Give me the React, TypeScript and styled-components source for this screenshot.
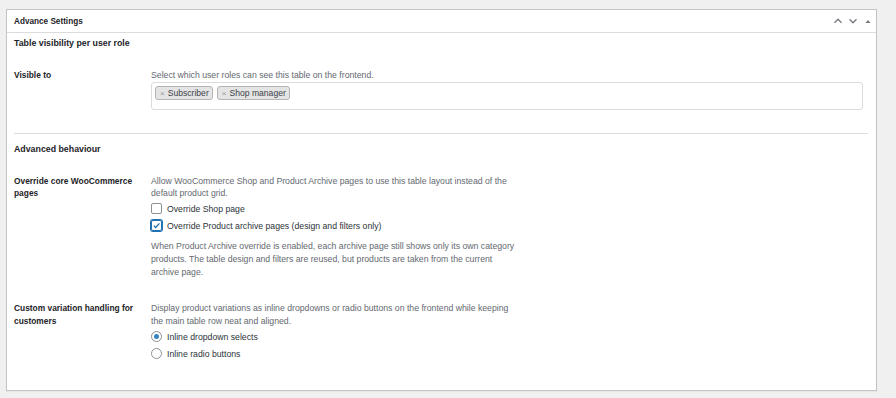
import React, { useState } from "react";
import styled, { createGlobalStyle } from "styled-components";

const GlobalStyle = createGlobalStyle`
  body {
    margin: 0;
    background: #f0f0f1;
    font-family: "Liberation Sans", Arial, sans-serif;
    color: #3c434a;
  }
`;

const Page = styled.div`
  padding: 9px 19px 9px 6px;
`;

const Panel = styled.div`
  background: #fff;
  border: 1px solid #c3c4c7;
  box-shadow: 0 1px 1px rgba(0, 0, 0, 0.04);
`;

const PanelHeader = styled.div`
  height: 22px;
  display: flex;
  align-items: center;
  justify-content: space-between;
  padding: 0 3px 0 7px;
  border-bottom: 1px solid #dcdcde;
`;

const PanelTitle = styled.h2`
  margin: 0;
  font-size: 8.2px;
  font-weight: 700;
  color: #1d2327;
`;

const HeaderActions = styled.div`
  display: flex;
  align-items: center;
  gap: 5px;
  color: #787c82;
`;

const IconButton = styled.span`
  display: flex;
  align-items: center;
  justify-content: center;
  width: 10px;
  height: 10px;
`;

const PanelBody = styled.div`
  padding: 3px 8px 28px 7px;
`;

const SectionTitle = styled.h3<{ $top?: number }>`
  margin: ${(p) => p.$top ?? 0}px 0 0;
  font-size: 8.8px;
  line-height: 14px;
  font-weight: 700;
  color: #1d2327;
`;

const Row = styled.div<{ $top: number }>`
  display: grid;
  grid-template-columns: 137px 1fr;
  margin-top: ${(p) => p.$top}px;
`;

const Label = styled.div<{ $lh?: number }>`
  font-size: 8.4px;
  line-height: ${(p) => p.$lh ?? 12}px;
  font-weight: 700;
  color: #1d2327;
  padding-right: 8px;
`;

const Field = styled.div`
  display: flex;
  flex-direction: column;
`;

const Description = styled.p<{ $lh?: number; $top?: number }>`
  margin: ${(p) => p.$top ?? 0}px 0 0;
  font-size: 8.7px;
  line-height: ${(p) => p.$lh ?? 12}px;
  color: #646970;
  max-width: 367px;
`;

const TagBox = styled.div`
  margin-top: 1px;
  height: 28px;
  width: 712px;
  box-sizing: border-box;
  border: 1px solid #dcdcde;
  border-radius: 3px;
  padding: 3px 3px;
  display: flex;
  align-items: flex-start;
  gap: 4px;
`;

const Tag = styled.span`
  display: inline-flex;
  align-items: center;
  gap: 3px;
  height: 14px;
  box-sizing: border-box;
  padding: 0 3px 0 4px;
  background: #e4e4e4;
  border: 1px solid #b4b4b4;
  border-radius: 3px;
  font-size: 8.6px;
  color: #3c434a;
`;

const TagRemove = styled.span`
  color: #999;
  font-size: 8px;
`;

const Divider = styled.hr`
  margin: 23px 0 0;
  border: 0;
  border-top: 1px solid #dcdcde;
`;

const Option = styled.label`
  display: flex;
  align-items: center;
  gap: 5px;
  height: 17px;
  font-size: 8.7px;
  color: #2c3338;
  cursor: pointer;
`;

const CheckBox = styled.span<{ $checked: boolean }>`
  width: 9px;
  height: 9px;
  border: 1px solid ${(p) => (p.$checked ? "#2271b1" : "#8c8f94")};
  border-radius: 2px;
  display: flex;
  align-items: center;
  justify-content: center;
  box-shadow: ${(p) => (p.$checked ? "0 0 0 1px #2271b1" : "none")};
`;

const Radio = styled.span<{ $checked: boolean }>`
  width: 9px;
  height: 9px;
  border: 1px solid #8c8f94;
  border-radius: 50%;
  display: flex;
  align-items: center;
  justify-content: center;
  &::after {
    content: "";
    width: 5px;
    height: 5px;
    border-radius: 50%;
    background: ${(p) => (p.$checked ? "#3582c4" : "transparent")};
  }
`;

const Options = styled.div<{ $top?: number }>`
  margin-top: ${(p) => p.$top ?? 1}px;
`;

const Chevron = ({ up }: { up?: boolean }) => (
  <svg width="10" height="10" viewBox="0 0 10 10">
    <path
      d={up ? "M1.5 6.8 L5 3.3 L8.5 6.8" : "M1.5 3.3 L5 6.8 L8.5 3.3"}
      fill="none"
      stroke="currentColor"
      strokeWidth="1.4"
    />
  </svg>
);

const Triangle = () => (
  <svg width="8" height="8" viewBox="0 0 8 8">
    <path d="M1.5 6 L4 3 L6.5 6 Z" fill="currentColor" />
  </svg>
);

const Tick = () => (
  <svg width="9" height="9" viewBox="0 0 9 9">
    <path d="M1.8 4.6 L3.7 6.5 L7.4 2.4" fill="none" stroke="#2271b1" strokeWidth="1.3" />
  </svg>
);

export default function App() {
  const [shop, setShop] = useState(false);
  const [archive, setArchive] = useState(true);
  const [variation, setVariation] = useState("dropdown");

  return (
    <>
      <GlobalStyle />
      <Page>
        <Panel>
          <PanelHeader>
            <PanelTitle>Advance Settings</PanelTitle>
            <HeaderActions>
              <IconButton><Chevron up /></IconButton>
              <IconButton><Chevron /></IconButton>
              <IconButton><Triangle /></IconButton>
            </HeaderActions>
          </PanelHeader>
          <PanelBody>
            <SectionTitle>Table visibility per user role</SectionTitle>
            <Row $top={19}>
              <Label>Visible to</Label>
              <Field>
                <Description>Select which user roles can see this table on the frontend.</Description>
                <TagBox>
                  <Tag><TagRemove>×</TagRemove>Subscriber</Tag>
                  <Tag><TagRemove>×</TagRemove>Shop manager</Tag>
                </TagBox>
              </Field>
            </Row>
            <Divider />
            <SectionTitle $top={8}>Advanced behaviour</SectionTitle>
            <Row $top={19}>
              <Label>Override core WooCommerce pages</Label>
              <Field>
                <Description>
                  Allow WooCommerce Shop and Product Archive pages to use this table layout instead of the default product grid.
                </Description>
                <Options>
                  <Option onClick={() => setShop(!shop)}>
                    <CheckBox $checked={shop}>{shop && <Tick />}</CheckBox>
                    Override Shop page
                  </Option>
                  <Option onClick={() => setArchive(!archive)}>
                    <CheckBox $checked={archive}>{archive && <Tick />}</CheckBox>
                    Override Product archive pages (design and filters only)
                  </Option>
                </Options>
                <Description $lh={13} $top={6}>
                  When Product Archive override is enabled, each archive page still shows only its own category products. The table design and filters are reused, but products are taken from the current archive page.
                </Description>
              </Field>
            </Row>
            <Row $top={23}>
              <Label $lh={13}>Custom variation handling for customers</Label>
              <Field>
                <Description $lh={13}>
                  Display product variations as inline dropdowns or radio buttons on the frontend while keeping the main table row neat and aligned.
                </Description>
                <Options $top={0}>
                  <Option onClick={() => setVariation("dropdown")}>
                    <Radio $checked={variation === "dropdown"} />
                    Inline dropdown selects
                  </Option>
                  <Option onClick={() => setVariation("radio")}>
                    <Radio $checked={variation === "radio"} />
                    Inline radio buttons
                  </Option>
                </Options>
              </Field>
            </Row>
          </PanelBody>
        </Panel>
      </Page>
    </>
  );
}
